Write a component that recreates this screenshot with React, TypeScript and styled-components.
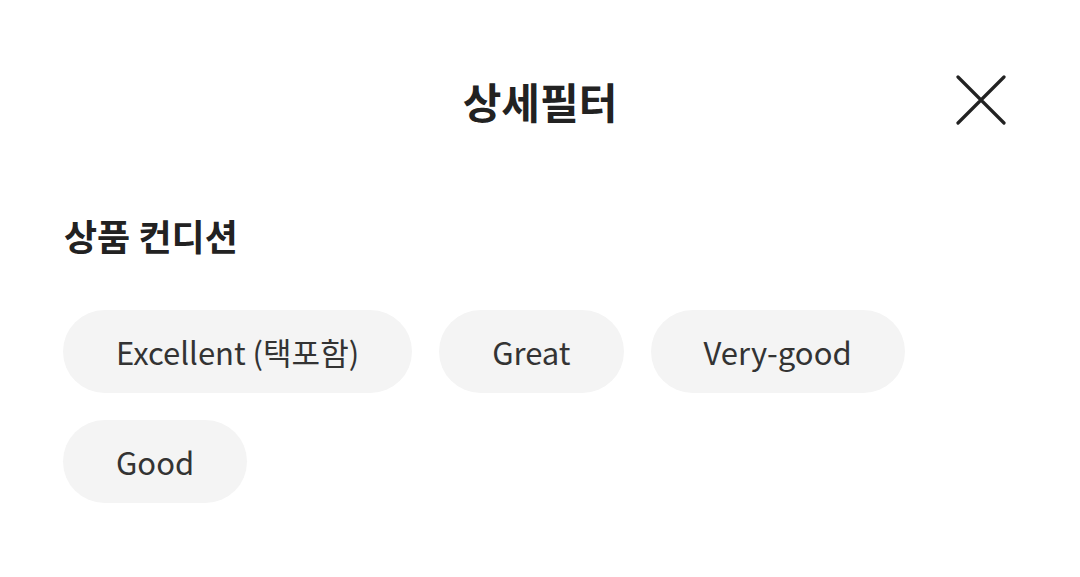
import styled, { createGlobalStyle } from 'styled-components';

const GlobalStyle = createGlobalStyle`
  html, body {
    margin: 0;
    padding: 0;
    background: #ffffff;
  }
  body {
    font-family: 'Noto Sans CJK KR', 'Noto Sans', sans-serif;
    color: #222222;
  }
`;

const conditions = ['Excellent (택포함)', 'Great', 'Very-good', 'Good'];

const CloseIcon = () => (
  <svg width="50" height="50" viewBox="0 0 50 50" fill="none">
    <path d="M2 2L48 48M48 2L2 48" stroke="#222" strokeWidth="3.2" strokeLinecap="round" />
  </svg>
);

const App = () => {
  return (
    <>
      <GlobalStyle />
      <Sheet>
        <Header>
          <Title>상세필터</Title>
          <CloseButton aria-label="닫기">
            <CloseIcon />
          </CloseButton>
        </Header>
        <Section>
          <SectionTitle>상품 컨디션</SectionTitle>
          <ChipList>
            {conditions.map(label => (
              <Chip key={label}>{label}</Chip>
            ))}
          </ChipList>
        </Section>
      </Sheet>
    </>
  );
};

export default App;

const Sheet = styled.div`
  width: 1080px;
  height: 577px;
  display: flex;
  flex-direction: column;
  padding: 0 64px;
  box-sizing: border-box;
`;

const Header = styled.div`
  position: relative;
  height: 200px;
  display: flex;
  align-items: center;
  justify-content: center;
`;

const Title = styled.h1`
  margin: 0;
  font-size: 42px;
  font-weight: 700;
  letter-spacing: 0;
  color: #222;
`;

const CloseButton = styled.button`
  position: absolute;
  right: 9px;
  top: 74px;
  width: 52px;
  height: 52px;
  padding: 1px;
  border: none;
  background: none;
  cursor: pointer;
`;

const Section = styled.div`
  display: flex;
  flex-direction: column;
`;

const SectionTitle = styled.h2`
  margin: 12px 0 52px;
  font-size: 36px;
  font-weight: 700;
  color: #222;
  line-height: 46px;
`;

const ChipList = styled.div`
  display: flex;
  flex-wrap: wrap;
  gap: 27px 27px;
  margin-left: -1px;
`;

const Chip = styled.button`
  height: 83px;
  padding: 0 53px;
  border: none;
  border-radius: 42px;
  background: #f4f4f4;
  font-family: 'Noto Sans CJK KR', 'Noto Sans', sans-serif;
  font-size: 31px;
  color: #333;
  cursor: pointer;
`;
